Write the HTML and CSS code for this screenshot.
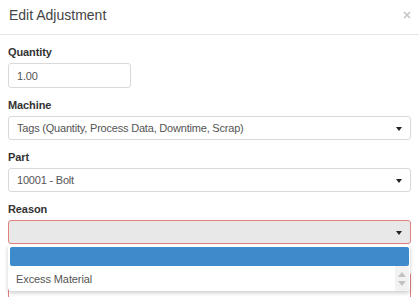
FILE: index.html
```html
<!DOCTYPE html>
<html lang="en">
<head>
  <meta charset="UTF-8">
  <title>Edit Adjustment</title>
  <link rel="stylesheet" href="styles.css">
</head>
<body>
  <div class="modal">
    <div class="modal-header">
      <h4 class="modal-title">Edit Adjustment</h4>
      <span class="close">
        <svg width="8" height="8" viewBox="0 0 8 8"><path d="M1 1L7 7M7 1L1 7" stroke="#c4c4c4" stroke-width="1.6"/></svg>
      </span>
    </div>

    <div class="modal-body">
      <div class="form-group">
        <label>Quantity</label>
        <div class="input short">1.00</div>
      </div>

      <div class="form-group">
        <label>Machine</label>
        <div class="select">Tags (Quantity, Process Data, Downtime, Scrap)</div>
      </div>

      <div class="form-group">
        <label>Part</label>
        <div class="select">10001 - Bolt</div>
      </div>

      <div class="form-group reason">
        <label>Reason</label>
        <div class="select invalid open"></div>

        <!-- open dropdown list -->
        <div class="dropdown">
          <div class="option selected"></div>
          <div class="option">Excess Material</div>
          <div class="scroll">
            <span class="up"></span>
            <span class="down"></span>
          </div>
        </div>
      </div>

      <div class="form-group">
        <label>Notes</label>
        <div class="input invalid tall"></div>
      </div>
    </div>
  </div>
</body>
</html>
```

FILE: styles.css
```css
body {
  margin: 0;
  background: #fff;
  font-family: "Liberation Sans", Arial, sans-serif;
  color: #333;
  overflow: hidden;
}
.modal-header {
  height: 34px;
  border-bottom: 1px solid #e5e5e5;
  padding: 0 8px 0 9px;
  display: flex;
  align-items: center;
  justify-content: space-between;
}
.modal-title {
  margin: 0;
  font-size: 14px;
  font-weight: normal;
  color: #444;
  position: relative;
  top: -2px;
}
.close {
  display: flex;
  position: relative;
  top: -2px;
}
.modal-body {
  padding: 10px 8px 0;
}
.form-group {
  margin-bottom: 10px;
}
label {
  display: block;
  font-size: 11px;
  font-weight: bold;
  letter-spacing: -0.1px;
  line-height: 15px;
  margin-bottom: 3px;
  color: #333;
}
.input, .select {
  box-sizing: border-box;
  border: 1px solid #d9d9d9;
  border-radius: 3px;
  font-size: 11px;
  letter-spacing: -0.2px;
  color: #555;
  padding: 0 8px;
  display: flex;
  align-items: center;
}
.input {
  height: 25px;
}
.input.short {
  width: 123px;
}
.input.tall {
  height: 60px;
}
.select {
  height: 24px;
  position: relative;
}
.select::after {
  content: "";
  position: absolute;
  right: 8px;
  top: 10px;
  border-left: 3px solid transparent;
  border-right: 3px solid transparent;
  border-top: 4px solid #222;
}
.invalid {
  border-color: #e38080;
}
.select.open {
  background: #e8e8e8;
}
.reason {
  position: relative;
}
.dropdown {
  position: absolute;
  left: 0;
  right: 1px;
  top: 43px;
  height: 46px;
  background: #fff;
  box-shadow: 0 2px 4px rgba(0, 0, 0, 0.2);
  border-radius: 0 0 3px 3px;
  padding: 2px 0 0 2px;
  box-sizing: border-box;
  z-index: 2;
}
.option {
  height: 23px;
  padding-top: 3px;
  box-sizing: border-box;
  font-size: 11px;
  letter-spacing: -0.1px;
  color: #555;
  display: flex;
  align-items: center;
  padding-left: 6px;
}
.option.selected {
  background: #3e8acb;
  border-radius: 2px;
  height: 19px;
  padding-top: 0;
  margin-right: 1px;
}
.scroll {
  position: absolute;
  right: 1px;
  top: 21px;
  bottom: 0;
  width: 14px;
  background: #f2f2f2;
}
.scroll .up, .scroll .down {
  position: absolute;
  left: 3px;
  border-left: 4px solid transparent;
  border-right: 4px solid transparent;
}
.scroll .up {
  top: 6px;
  border-bottom: 5px solid #c2c2c2;
}
.scroll .down {
  top: 15px;
  border-top: 5px solid #c2c2c2;
}
```
